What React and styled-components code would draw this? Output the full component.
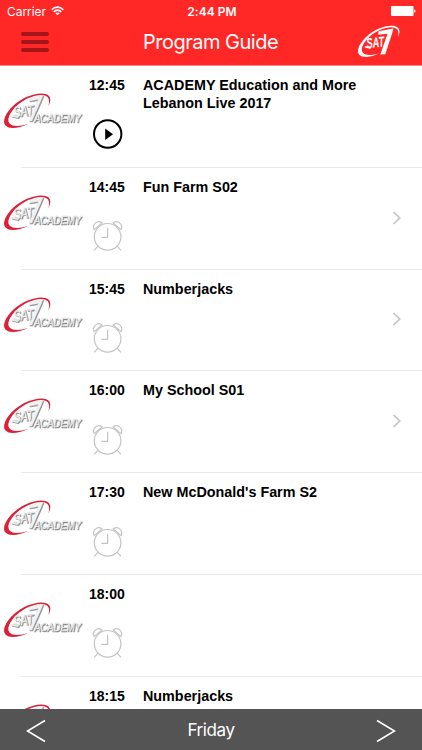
import React from 'react';
import styled, { createGlobalStyle } from 'styled-components';

const programs = [
    { time: '12:45', title: 'ACADEMY Education and More Lebanon Live 2017', live: true },
    { time: '14:45', title: 'Fun Farm S02', more: true },
    { time: '15:45', title: 'Numberjacks', more: true },
    { time: '16:00', title: 'My School S01', more: true },
    { time: '17:30', title: "New McDonald's Farm S2" },
    { time: '18:00', title: '' },
    { time: '18:15', title: 'Numberjacks' },
];

const Swoosh = ({ color }) => (
    <path
        fill={color}
        d="M48.300 18.500C51.600 12.600 51 7.600 45.500 6C37.500 3.700 22.500 9 13.500 17.500C5.500 25 1.800 33.500 5.500 37.600C9.500 41.800 19 40.300 27.800 36C20 38.600 12.500 38.900 9.500 35.500C6.500 31.500 9.500 24.500 17 17.500C25.500 9.800 38.500 5.400 44.800 7.600C49.400 9.200 50 13 48.300 18.500Z"
    />
);

const Wordmark = () => (
    <>
        <path d="M30 10.500L43 7.500L41.500 11.500L32 33L29 33.200L38.300 11.600L29 13.200Z" />
        <path d="M12 27L18.500 28.600L18 30L11.500 28.400Z" />
        <LogoText x="14" y="29" $size={14.5} $weight={400} textLength="20" lengthAdjust="spacingAndGlyphs" transform="rotate(-6 14 29)">SAT</LogoText>
        <LogoText x="34" y="34.4" $size={10.8} $weight={400} textLength="47" lengthAdjust="spacingAndGlyphs">ACADEMY</LogoText>
    </>
);

const AcademyLogo = () => (
    <svg width="88" height="44" viewBox="0 0 88 44">
        <Swoosh color="#dc2038" />
        <g fill="#8a8a8a" stroke="#8a8a8a" strokeWidth="0.600" transform="translate(0.9 0.8)"><Wordmark /></g>
        <g fill="#f1f1f1" stroke="#dcdcdc" strokeWidth="0.300"><Wordmark /></g>
    </svg>
);

const HeaderLogo = () => (
    <svg width="44" height="34" viewBox="3 4.500 49 37.900">
        <Swoosh color="#fff" />
        <g fill="#fff">
            <path d="M27 11.500L43.500 8.500L42.300 13.500L34.500 37L29 37.500L37 14.200L26.500 15.500Z" />
            <path d="M12 28L18.500 29.600L18 31.200L11.500 29.600Z" />
            <LogoText x="14" y="30.500" $size={16} $weight={700} textLength="20" lengthAdjust="spacingAndGlyphs" transform="rotate(-6 14 30)">SAT</LogoText>
        </g>
    </svg>
);

const PlayIcon = () => (
    <svg width="32" height="32" viewBox="0 0 32 32">
        <circle cx="15.700" cy="16" r="13.700" fill="none" stroke="#000" strokeWidth="2" />
        <path d="M13.200 10.500L21 16.200L13.200 21.900Z" />
    </svg>
);

const AlarmIcon = () => (
    <svg width="32" height="32" viewBox="0 -0.800 32 32" fill="none" stroke="#c4c4c4" strokeWidth="1.200">
        <circle cx="15.600" cy="17" r="13.300" />
        <path d="M15.600 8V17.500H9.400" />
        <path d="M2.200 9.800C-0.500 5 5.300 -0.500 10 3.200Z" />
        <path d="M29 9.800C31.700 5 25.900 -0.500 21.200 3.200Z" />
        <path d="M6 26.400L2.200 30.500M25.200 26.400L29 30.500" />
    </svg>
);

const WifiIcon = () => (
    <svg width="13" height="10" viewBox="0 0 13 10" fill="none" stroke="#fff" strokeWidth="1.600">
        <path d="M0.700 3.700C4 0.300 9 0.300 12.300 3.700" />
        <path d="M2.700 5.900C5 3.700 8 3.700 10.300 5.900" />
        <path d="M6.500 9.300L4.300 7.200C5.600 6.100 7.400 6.100 8.700 7.200Z" fill="#fff" stroke="none" />
    </svg>
);

const BatteryIcon = () => (
    <svg width="25" height="10" viewBox="0 0 25 10" fill="#fff">
        <rect x="0" y="0" width="22.500" height="10" rx="1" />
        <path d="M23.200 3.200C25 3.700 25 6.300 23.200 6.800Z" />
    </svg>
);

const ProgramRow = ({ program }) => (
    <Row>
        <LogoCell><AcademyLogo /></LogoCell>
        <TimeCell>
            <Time>{program.time}</Time>
            {program.live ? <PlayIcon /> : <AlarmIcon />}
        </TimeCell>
        <ProgramTitle>{program.title}</ProgramTitle>
        <MoreCell>
            {program.more ?
                <svg width="10" height="14" viewBox="0 0 10 14" fill="none" stroke="#c3c3c8" strokeWidth="1.700">
                    <path d="M1.500 1L7.700 7L1.500 13" />
                </svg> : null}
        </MoreCell>
    </Row>
);

const App = () => {
    return (
        <>
            <GlobalStyle />
            <Screen>
                <Header>
                    <StatusBar>
                        <Carrier><span>Carrier</span><WifiIcon /></Carrier>
                        <Clock>2:44 PM</Clock>
                        <Battery><BatteryIcon /></Battery>
                    </StatusBar>
                    <NavBar>
                        <MenuButton aria-label="Menu"><i /><i /><i /></MenuButton>
                        <PageTitle>Program Guide</PageTitle>
                        <BrandCell><HeaderLogo /></BrandCell>
                    </NavBar>
                </Header>
                <List>
                    {programs.map((program) => <ProgramRow key={program.time} program={program} />)}
                </List>
                <DayBar>
                    <DayButton aria-label="Previous day">
                        <svg width="20" height="24" viewBox="0 0 20 24"><path d="M19 1.500L1.500 12L19 22.500" /></svg>
                    </DayButton>
                    <DayName>Friday</DayName>
                    <DayButton aria-label="Next day">
                        <svg width="20" height="24" viewBox="0 0 20 24"><path d="M1 1.500L18.500 12L1 22.500" /></svg>
                    </DayButton>
                </DayBar>
            </Screen>
        </>
    );
};

const GlobalStyle = createGlobalStyle`
    *{
        box-sizing: border-box;
    }
    body{
        margin: 0;
        background: #fff;
        font-family: 'Inter', 'Liberation Sans', sans-serif;
    }
    svg{
        display: block;
        flex-shrink: 0;
    }
    button{
        border: none;
        padding: 0;
        background: none;
    }
`;

const LogoText = styled.text`
    font: italic ${props => props.$weight} ${props => props.$size}px 'Liberation Sans', sans-serif;
`;

const Screen = styled.div`
    display: flex;
    flex-direction: column;
    width: 422px;
    height: 750px;
    overflow: hidden;
`;

const Header = styled.header`
    flex: none;
    height: 66px;
    background: #ff2827;
    border-bottom: 1px solid #f3898a;
    color: #fff;
`;

const StatusBar = styled.div`
    display: grid;
    grid-template-columns: 1fr auto 1fr;
    align-items: center;
    height: 22px;
    padding: 0 6px 0 7px;
    font-size: 12px;
`;

const Carrier = styled.div`
    display: flex;
    align-items: center;
    gap: 5px;
    letter-spacing: -0.05px;
`;

const Clock = styled.div`
    padding-left: 1px;
    font-weight: 600;
    letter-spacing: 0.05px;
`;

const Battery = styled.div`
    display: flex;
    justify-content: flex-end;
`;

const NavBar = styled.div`
    display: grid;
    grid-template-columns: 65px 1fr 65px;
    align-items: center;
    height: 40px;
`;

const MenuButton = styled.button`
    display: flex;
    flex-direction: column;
    gap: 4px;
    width: 28px;
    margin-left: 21px;
    i{
        height: 4px;
        border-radius: 2px;
        background: #a31518;
    }
`;

const PageTitle = styled.h1`
    margin: 0;
    padding-right: 1px;
    font-size: 20px;
    font-weight: 400;
    letter-spacing: -0.500px;
    line-height: 40px;
    text-align: center;
    white-space: nowrap;
`;

const BrandCell = styled.div`
    display: flex;
`;

const List = styled.main`
    flex: 1;
    min-height: 0;
    overflow: hidden;
`;

const Row = styled.div`
    display: grid;
    grid-template-columns: 88px 55px 230px 1fr;
    height: 101.8px;
    background: linear-gradient(#e9e9e9, #e9e9e9) 21px 100% / 100% 1px no-repeat;
    font-family: 'Liberation Sans', sans-serif;
    font-size: 14.35px;
    font-weight: bold;
    line-height: 17.500px;
`;

const LogoCell = styled.div`
    padding-top: 22px;
`;

const TimeCell = styled.div`
    padding: 11px 0 0 1px;
    svg{
        margin: 23px 0 0 3px;
    }
`;

const Time = styled.div`
    font-size: 14px;
`;

const ProgramTitle = styled.div`
    padding-top: 11px;
`;

const MoreCell = styled.div`
    display: flex;
    align-items: center;
    padding: 0 0 2px 19px;
`;

const DayBar = styled.footer`
    display: flex;
    align-items: center;
    justify-content: space-between;
    flex: none;
    height: 41px;
    padding: 3px 26px 0;
    background: #545454;
    color: #fff;
`;

const DayButton = styled.button`
    path{
        fill: none;
        stroke: #fff;
        stroke-width: 1.600;
    }
`;

const DayName = styled.div`
    padding-bottom: 2px;
    font-size: 17px;
    letter-spacing: -0.400px;
`;

export default App;
